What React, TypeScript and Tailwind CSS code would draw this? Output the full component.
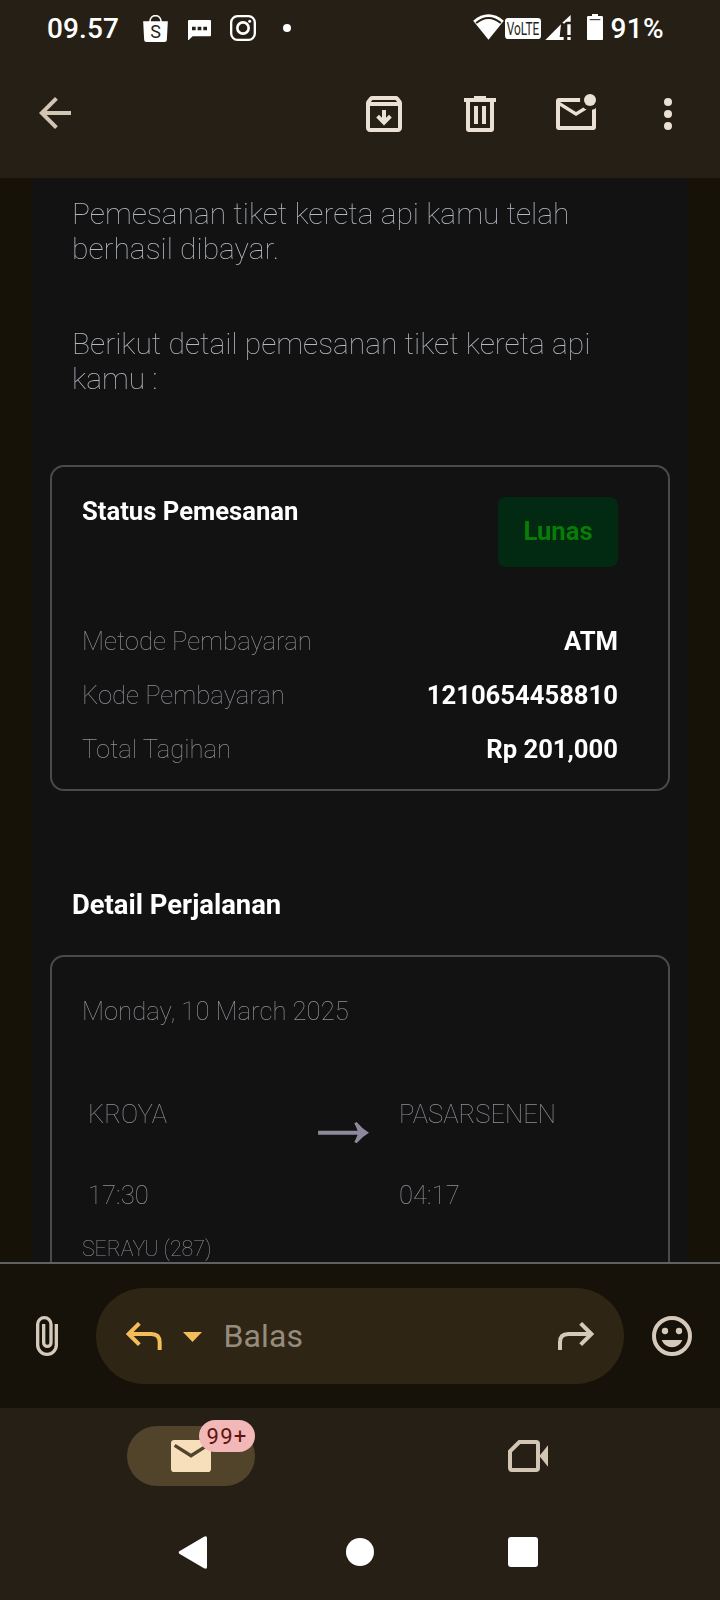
import type { ReactNode } from 'react'

const payments = [
  { label: 'Metode Pembayaran', value: 'ATM' },
  { label: 'Kode Pembayaran', value: '1210654458810' },
  { label: 'Total Tagihan', value: 'Rp 201,000' },
]

const Icon = ({ className, children }: { className?: string; children: ReactNode }) => (
  <svg viewBox="0 0 24 24" fill="currentColor" className={`h-12 w-12 shrink-0 ${className ?? ''}`}>
    {children}
  </svg>
)

const StatusBar = () => (
  <div className="flex h-14 items-start pl-[47px] text-[28px] font-medium leading-8 text-white">
    <span className="mt-[13px] w-[96px] tracking-[0.1px]">09.57</span>
    {/* Shopping bag */}
    <svg viewBox="0 0 74 81" className="mt-[15px] h-[27px] w-[25px]">
      <path d="M20 22C20 -5 54 -5 54 22" fill="none" stroke="white" strokeWidth="5" />
      <path d="M0 19H74L71 75Q71 81 64 81H10Q3 81 3 75Z" fill="white" />
      <text x="37" y="68" textAnchor="middle" fontSize="54" fontWeight="400" fill="#261f15">S</text>
    </svg>
    {/* Chat bubble */}
    <svg viewBox="0 0 69 62" className="ml-[20px] mt-[19.5px] h-[20.7px] w-[23px]">
      <path d="M3 0H66Q69 0 69 3V46Q69 49 66 49H14L0 62V3Q0 0 3 0Z" fill="white" />
      <path d="M12 20H23V31H12ZM29 20H40V31H29ZM46 20H57V31H46Z" fill="#261f15" />
    </svg>
    {/* Camera */}
    <svg viewBox="0 0 78 78" className="ml-[19px] mt-[15px] h-[26px] w-[26px]" fill="none" stroke="white" strokeWidth="7">
      <rect x="3.5" y="3.5" width="71" height="71" rx="19" />
      <circle cx="39" cy="39" r="17" strokeWidth="8" />
      <circle cx="59" cy="19" r="4.5" fill="white" stroke="none" />
    </svg>
    <span className="ml-[27px] mt-[24px] h-[8px] w-[8px] rounded-full bg-white" />
    {/* Wifi */}
    <svg viewBox="0 0 92 78" className="ml-[182px] mt-[14px] h-[26px] w-[31px]">
      <path d="M0 20Q46 -18 92 20L46 77Z" fill="white" />
      <path d="M9 27Q46 -3 83 27" fill="none" stroke="#261f15" strokeWidth="6" />
    </svg>
    <svg viewBox="0 0 108 63" className="ml-[1px] mt-[18px] h-[21px] w-[36px] overflow-visible">
      <rect width="108" height="63" rx="10" fill="white" />
      <text x="54" y="52" textAnchor="middle" fontSize="56" fontWeight="400" fill="#261f15" textLength="98" lengthAdjust="spacingAndGlyphs">VoLTE</text>
    </svg>
    {/* Signal */}
    <svg viewBox="0 0 78 76" className="ml-[4px] mt-[14.6px] h-[25.3px] w-[26px]" fill="white">
      <path d="M0 76L48 28L44 66H56V76Z" />
      <path d="M52 23L77 0V20H64L57 26Z" />
      <path d="M67 28H77V60H67ZM67 66H77V76H67Z" />
    </svg>
    {/* Battery */}
    <svg viewBox="0 0 48 79" className="ml-[15.5px] mt-[14px] h-[26.3px] w-[16px]">
      <path d="M15 0H33V6H44Q48 6 48 10V75Q48 79 44 79H4Q0 79 0 75V10Q0 6 4 6H15Z" fill="white" />
      <path d="M8 17H40" stroke="#261f15" strokeWidth="3" />
    </svg>
    <span className="ml-[8px] mt-[13px] tracking-[0.3px]">91%</span>
  </div>
)

const Toolbar = () => (
  <div className="flex h-[122px] items-start pl-[31px] pt-[34px] text-[#eae0d4]">
    <Icon className="-mt-px text-[#d2c5b4]">
      <path d="M20 11H7.83l5.59-5.59L12 4l-8 8 8 8 1.41-1.41L7.83 13H20z" />
    </Icon>
    <Icon className="ml-[281px]">
      <path fillRule="evenodd" d="M20.54 5.23l-1.39-1.68C18.88 3.21 18.47 3 18 3H6c-.47 0-.88.21-1.16.55L3.46 5.23C3.17 5.57 3 6.02 3 6.5V19c0 1.1.9 2 2 2h14c1.1 0 2-.9 2-2V6.5c0-.48-.17-.93-.46-1.27zM6.24 5h11.52l.83 1H5.42zM5 19V8h14v11z" />
      <path d="M8.1 13.8l1.4-1.4 1.5 1.5V10h2v3.9l1.5-1.5 1.4 1.4-3.9 3.9z" />
    </Icon>
    <Icon className="ml-12">
      <path fillRule="evenodd" d="M9 4V3h6v1h5v2h-1v13.5q0 1.5-1.5 1.5h-11Q5 21 5 19.500V6H4V4zM7 6v13h10V6z" />
      <path d="M9 8h2v9H9zM13 8h2v9h-2z" />
    </Icon>
    <Icon className="ml-12">
      <path d="M22 8.980V18.500q0 1.500-1.500 1.500h-17Q2 20 2 18.500v-13Q2 4 3.500 4h10.600c-.13.640-.13 1.360 0 2H4l8 5 3.670-2.290c.470.430 1.020.760 1.630.980L12 13 4 8v10h16V9.900c.740-.150 1.420-.480 2-.920z" />
      <circle cx="19" cy="5" r="3" />
    </Icon>
    <Icon className="ml-11">
      <circle cx="12" cy="6" r="2" />
      <circle cx="12" cy="12" r="2" />
      <circle cx="12" cy="18" r="2" />
    </Icon>
  </div>
)

const MailBody = () => (
  <main className="h-[1084px] overflow-hidden bg-[#171208] px-8">
    <div className="h-full bg-[#121212]">
      <div className="h-full px-[18px] pt-[18px] will-change-transform">
        <div className="pl-[22px] text-[29.95px] font-thin leading-[35px] text-[#b4b9c1]">
          <p>Pemesanan tiket kereta api kamu telah<br />berhasil dibayar.</p>
          <p className="mt-[60px]">Berikut detail pemesanan tiket kereta api<br />kamu :</p>
        </div>

        {/* Status */}
        <section className="mt-[69px] h-[326px] rounded-[14px] border-2 border-[#4a4a4a] pl-[30px] pr-[50px] pt-[29px] text-[25.65px] leading-[30px]">
          <div className="flex items-start justify-between">
            <h2 className="font-bold text-white">Status Pemesanan</h2>
            <span className="mt-px flex h-[70px] w-[120px] justify-center rounded-lg bg-[#022a13] pt-[19px] font-bold text-[#077d07]">Lunas</span>
          </div>
          <div className="mt-[59px] flex flex-col gap-6">
            {payments.map((item) => (
              <div key={item.label} className="flex justify-between">
                <span className="font-thin text-[#918f98]">{item.label}</span>
                <span className="font-bold text-white">{item.value}</span>
              </div>
            ))}
          </div>
        </section>

        <h2 className="mt-[98px] pl-[22px] text-[27.4px] font-bold leading-8 text-white">Detail Perjalanan</h2>

        {/* Trip */}
        <section className="mt-[34px] h-[400px] rounded-[14px] border-2 border-[#4a4a4a] pl-[30px] pt-[39px] text-[25.65px] font-thin leading-[30px] text-[#918f98]">
          <p>Monday, 10 March 2025</p>
          <div className="mt-[73px] flex pl-[6px]">
            <div className="flex w-[230px] flex-col gap-[51px]">
              <span>KROYA</span>
              <span>17:30</span>
            </div>
            <svg viewBox="0 0 153 64" className="mt-[23px] h-[21.3px] w-[51px]" fill="#8d889b">
              <path d="M0 26H119Q114 14 109 4L116 0Q132 20 153 32Q132 44 116 64L109 60Q114 50 119 38H0Z" />
            </svg>
            <div className="ml-[30px] flex flex-col gap-[51px]">
              <span>PASARSENEN</span>
              <span>04:17</span>
            </div>
          </div>
          <p className="mt-[26px] text-[21.35px] leading-[26px]">SERAYU (287)</p>
        </section>
      </div>
    </div>
  </main>
)

const ReplyBar = () => (
  <div className="flex h-[146px] items-center border-t-2 border-[#606064] bg-[#161209] pl-[36px] text-[#d5c9b9]">
    <svg viewBox="0 0 66 120" className="h-10 w-[22px]" fill="none" stroke="currentColor" strokeWidth="10">
      <path d="M61 24V87A28 28 0 0 1 5 87V25A20 20 0 0 1 45 25V80A11 11 0 0 1 23 80V24" />
    </svg>
    <div className="ml-[38px] flex h-24 w-[528px] items-center rounded-full bg-[#2e2515] pl-[30px] pr-[30px]">
      <svg viewBox="0 0 108 84" className="h-7 w-9 text-[#f3bd5a]" fill="none" stroke="currentColor" strokeWidth="12">
        <path d="M40 4L8 36L40 68M8 36H76Q101 36 101 61V84" />
      </svg>
      <svg viewBox="0 0 57 30" className="ml-[20.5px] mt-[2px] h-[10px] w-[19px]" fill="#f3bd5a">
        <path d="M0 0H57L28.500 30Z" />
      </svg>
      <span className="ml-[22px] text-[32px] leading-10 tracking-[0.1px] text-[#978c7c]">Balas</span>
      <svg viewBox="0 0 108 84" className="ml-auto h-7 w-9" fill="none" stroke="currentColor" strokeWidth="12">
        <path d="M68 4L100 36L68 68M100 36H31Q6 36 6 61V84" />
      </svg>
    </div>
    <svg viewBox="0 0 120 120" className="ml-[28px] h-10 w-10" fill="currentColor">
      <circle cx="60" cy="60" r="54" fill="none" stroke="currentColor" strokeWidth="12" />
      <circle cx="39" cy="45" r="9.500" />
      <circle cx="81" cy="45" r="9.500" />
      <path d="M29 72H91Q82 94 60 94Q38 94 29 72Z" />
    </svg>
  </div>
)

const BottomNav = () => (
  <nav className="h-[192px] bg-[#261f15]">
    <div className="flex items-start pl-[127px] pt-[18px]">
      <div className="relative flex h-[60px] w-32 rounded-full bg-[#52442a] pl-[44px] pt-[14px]">
        <svg viewBox="0 0 120 96" className="h-8 w-10">
          <rect width="120" height="96" rx="10" fill="#f7dfbb" />
          <path d="M11 16L60 47L109 16" fill="none" stroke="#52442a" strokeWidth="10" />
        </svg>
        <span className="absolute -top-[6px] right-0 flex h-8 w-14 items-center justify-center rounded-full bg-[#f2b8b8] pt-px text-[22px] tracking-[1.2px] text-[#601410]">99+</span>
      </div>
      {/* Meet */}
      <svg viewBox="0 0 120 96" className="ml-[253px] mt-[14px] h-8 w-10 text-[#d2c5b4]" fill="currentColor">
        <path d="M34 6H84Q90 6 90 12V84Q90 90 84 90H12Q6 90 6 84V34Z" fill="none" stroke="currentColor" strokeWidth="12" />
        <path d="M94 48L120 16V80Z" />
      </svg>
    </div>
    {/* System buttons */}
    <div className="flex h-[34px] items-center pl-[178px] mt-[49px]">
      <svg viewBox="0 0 87 99" className="h-[33px] w-[29px]" fill="white">
        <path d="M4 46L78 2Q87 -2 87 6V93Q87 101 78 97L4 53Q0 49.500 4 46Z" />
      </svg>
      <span className="ml-[139px] h-7 w-7 rounded-full bg-white" />
      <span className="ml-[134px] h-[30px] w-[30px] rounded-[3px] bg-white" />
    </div>
  </nav>
)

const App = () => {
  return (
    <div className="h-[1600px] w-[720px] overflow-hidden font-['Roboto',sans-serif]">
      <header className="bg-[#261f15]">
        <StatusBar />
        <Toolbar />
      </header>
      <MailBody />
      <ReplyBar />
      <BottomNav />
    </div>
  )
}

export default App
